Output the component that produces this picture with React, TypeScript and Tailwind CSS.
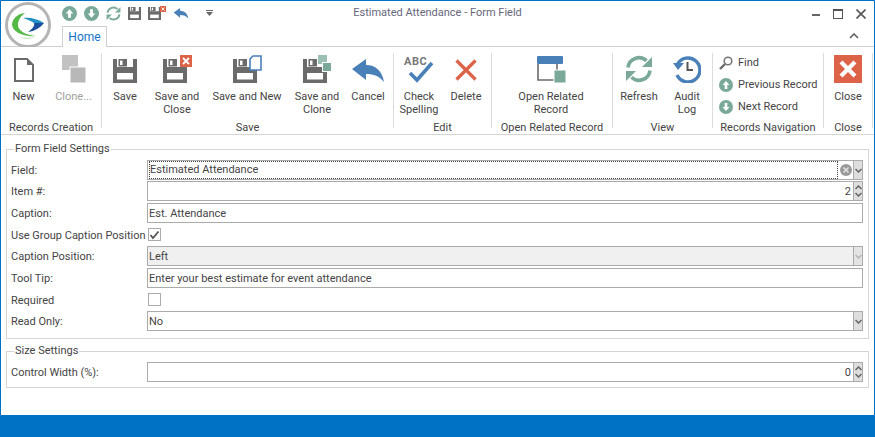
import React from 'react';

const TEAL = '#7aa999';
const GREY = '#6b6b6b';
const BLUE = '#4a80b8';
const RED = '#dc6347';

const Floppy = ({ size = 24 }: { size?: number }) => (
  <svg width={size} height={size} viewBox="0 0 24 24" className="block">
    <path fill={GREY} d="M0 0H4V8H20V0H24V24H0Z" />
    <rect x="4" y="14" width="16" height="6.5" fill="#fff" />
    <path fill={GREY} fillRule="evenodd" d="M5.5 0H14V7.5H5.5ZM7 1.5V6H9.5V1.5Z" />
  </svg>
);

const XBox = ({ size }: { size: number }) => (
  <svg width={size} height={size} viewBox="0 0 12 12" className="block">
    <rect width="12" height="12" fill={RED} />
    <path d="M3 3L9 9M9 3L3 9" stroke="#fff" strokeWidth="1.8" />
  </svg>
);

const ArrowCircle = ({ size = 15, down = false }: { size?: number; down?: boolean }) => (
  <svg width={size} height={size} viewBox="0 0 16 16" className="block">
    <circle cx="8" cy="8" r="8" fill={TEAL} />
    <path
      fill="#fff"
      d={down ? 'M6.5 3.5H9.5V8H12L8 12.5L4 8H6.5Z' : 'M6.5 12.5H9.5V8H12L8 3.5L4 8H6.5Z'}
    />
  </svg>
);

const Refresh = ({ size = 28 }: { size?: number }) => (
  <svg width={size} height={size} viewBox="0 0 28 28" className="block">
    <path d="M3 12.5A11 11 0 0 1 21.5 5.8" fill="none" stroke={TEAL} strokeWidth="3.6" />
    <path d="M25 15.5A11 11 0 0 1 6.5 22.2" fill="none" stroke={TEAL} strokeWidth="3.6" />
    <path d="M27 2V12H17Z" fill={TEAL} />
    <path d="M1 26V16H11Z" fill={TEAL} />
  </svg>
);

const Reply = ({ w = 32, h = 24 }: { w?: number; h?: number }) => (
  <svg width={w} height={h} viewBox="0 0 32 24" className="block">
    <path fill={BLUE} d="M0 10L14 0V6C24 6 30 12 32 23C27 17 22 15 14 15V21Z" />
  </svg>
);

const Logo = () => (
  <svg width="50" height="47" viewBox="0 0 50 47" className="block">
    <circle cx="27" cy="25" r="21.5" fill="#fff" stroke="#b4b4b4" strokeWidth="3" />
    <path fill="#55b947" d="M24 13C15 14 11 20 11 25C12 32 22 37 35 36C25 35 17 31 17 25C17 20 20 16 24 13Z" />
    <path fill="#c9e6c0" d="M18 37C24 40 30 39 35 37C29 38 23 38 18 37Z" />
    <path fill="#1f8fc4" d="M22 18C29 17 37 19 43 23L33 23C30 21 26 19 22 18Z" />
    <path fill="#1c4f9c" d="M33 23H43C39 28 34 31 27 32C31 29 34 26 33 23Z" />
  </svg>
);

const RibbonButton = ({
  w,
  icon,
  lines,
  disabled = false,
}: {
  w: string;
  icon: React.ReactNode;
  lines: string[];
  disabled?: boolean;
}) => (
  <div className={`flex flex-col items-center ${w}`}>
    <div className="flex h-[37px] w-full items-end justify-center pb-[7px]">{icon}</div>
    {lines.map((l) => (
      <div key={l} className={`whitespace-nowrap leading-[13px] ${disabled ? 'text-[#a0a0a0]' : ''}`}>
        {l}
      </div>
    ))}
  </div>
);

const Group = ({ w, label, children }: { w: string; label: string; children: React.ReactNode }) => (
  <div className={`flex h-full shrink-0 flex-col ${w}`}>
    <div className="flex h-[74px] shrink-0 pt-[6px]">{children}</div>
    <div className="h-[13px] whitespace-nowrap text-center leading-[14px]">{label}</div>
  </div>
);

const Sep = () => <div className="mt-[6px] h-[75px] w-px shrink-0 bg-[#dcdcdc]" />;

const Row = ({ h, label, children }: { h: string; label: string; children: React.ReactNode }) => (
  <div className={`flex ${h}`}>
    <div className="h-[20px] w-[136px] shrink-0 whitespace-nowrap leading-[22px]">{label}</div>
    <div className="min-w-0 flex-1">{children}</div>
  </div>
);

const Chevron = ({ up = false, color = '#666' }: { up?: boolean; color?: string }) => (
  <svg width="7" height="5" viewBox="0 0 7 5" className="block">
    <path d={up ? 'M0.5 4L3.5 1L6.5 4' : 'M0.5 1L3.5 4L6.5 1'} fill="none" stroke={color} strokeWidth="1.5" />
  </svg>
);

const DropBtn = ({ faded = false }: { faded?: boolean }) => (
  <div className={`flex w-[9px] shrink-0 items-center justify-center border-l border-[#ababab] ${faded ? 'bg-[#e4e4e4]' : 'bg-[#dedede]'}`}>
    <Chevron color={faded ? '#b5b5b5' : '#666'} />
  </div>
);

const SpinBtn = () => (
  <div className="flex w-[9px] shrink-0 flex-col items-center justify-center gap-[2px] border-l border-[#ababab] bg-[#dedede]">
    <Chevron up />
    <Chevron />
  </div>
);

const Input = ({
  children,
  right,
  alignRight = false,
  bg = 'bg-white',
}: {
  children?: React.ReactNode;
  right?: React.ReactNode;
  alignRight?: boolean;
  bg?: string;
}) => (
  <div className={`flex h-[20px] border border-[#ababab] ${bg}`}>
    <div className={`min-w-0 flex-1 px-px leading-[20px] ${alignRight ? 'pr-[2px] text-right' : ''}`}>{children}</div>
    {right}
  </div>
);

const Check = ({ checked = false }: { checked?: boolean }) => (
  <div className="mt-[3px] ml-px flex h-[13px] w-[13px] items-center justify-center border border-[#ababab] bg-white">
    {checked && (
      <svg width="11" height="10" viewBox="0 0 11 10" className="block">
        <path d="M1.5 5L4 8L9.5 1.5" fill="none" stroke="#555" strokeWidth="1.8" />
      </svg>
    )}
  </div>
);

const ListItem = ({ icon, label }: { icon: React.ReactNode; label: string }) => (
  <div className="flex h-[22px] items-center">
    <div className="flex w-[25px] justify-center pl-[1px]">{icon}</div>
    <span className="whitespace-nowrap">{label}</span>
  </div>
);

export default function App() {
  return (
    <div
      className="flex h-[437px] w-[875px] flex-col overflow-hidden border-x border-t border-[#0072c6] bg-white text-[11px] text-[#444]"
      style={{ fontFamily: 'Roboto, sans-serif' }}
    >
      {/* title bar */}
      <div className="flex h-[46px] shrink-0 border-b border-[#cfcfcf]">
        <div className="-mt-px h-[47px] w-[61px] shrink-0 overflow-hidden">
          <Logo />
        </div>
        <div className="flex min-w-0 flex-1 flex-col">
          <div className="grid h-[26px] grid-cols-[1fr_auto_1fr] items-center">
            <div className="flex items-center gap-[7px] pb-[1px]">
              <ArrowCircle />
              <ArrowCircle down />
              <Refresh size={15} />
              <Floppy size={13} />
              <div className="relative h-[14px] w-[18px]">
                <div className="mt-[1px]">
                  <Floppy size={13} />
                </div>
                <div className="absolute top-0 right-0">
                  <XBox size={6} />
                </div>
              </div>
              <Reply w={16} h={11} />
              <svg width="7" height="7" viewBox="0 0 7 7" className="ml-[10px] block">
                <path d="M0 0H7V1H0ZM0 2H7L3.5 6Z" fill="#666" />
              </svg>
            </div>
            <div className="-ml-[61px] whitespace-nowrap text-[#66667a]">Estimated Attendance - Form Field</div>
            <div className="flex items-center justify-end gap-[13px] pr-[8px]">
              <div className="mt-[3px] h-[2px] w-[8px] bg-[#666]" />
              <div className="h-[10px] w-[10px] border border-t-[2px] border-[#555]" />
              <svg width="10" height="10" viewBox="0 0 10 10" className="block">
                <path d="M0.5 0.5L9.5 9.5M9.5 0.5L0.5 9.5" stroke="#555" strokeWidth="1.6" />
              </svg>
            </div>
          </div>
          <div className="flex h-[20px] items-end justify-between">
            <div className="z-10 -mb-px h-[21px] w-[45px] border-x border-t border-[#cfcfcf] bg-white text-center text-[12px] leading-[21px] text-[#1273c9]">
              Home
            </div>
            <svg width="10" height="6" viewBox="0 0 10 6" className="mr-[15px] mb-[7px] block">
              <path d="M1 5L5 1L9 5" fill="none" stroke="#666" strokeWidth="1.7" />
            </svg>
          </div>
        </div>
      </div>

      {/* ribbon */}
      <div className="flex h-[88px] shrink-0 border-b border-[#d5d5d5]">
        <Group w="w-[100px]" label="Records Creation">
          <RibbonButton
            w="w-[45px]"
            lines={['New']}
            icon={
              <svg width="20" height="24" viewBox="0 0 20 24" className="mb-[1px] block">
                <path d="M1 1H13L19 7V23H1Z" fill="#fff" stroke={GREY} strokeWidth="2" />
                <path d="M13 1V7H19Z" fill={GREY} />
              </svg>
            }
          />
          <RibbonButton
            w="w-[55px]"
            lines={['Clone...']}
            disabled
            icon={
              <svg width="24" height="28" viewBox="0 0 24 28" className="block">
                <rect width="16" height="15" fill="#c2c2c2" />
                <rect x="8" y="12" width="16" height="16" fill="#b8b8b8" stroke="#fff" />
              </svg>
            }
          />
        </Group>
        <Sep />
        <Group w="w-[291px]" label="Save">
          <RibbonButton w="w-[46px]" lines={['Save']} icon={<Floppy />} />
          <RibbonButton
            w="w-[58px]"
            lines={['Save and', 'Close']}
            icon={
              <div className="relative h-[28px] w-[28px]">
                <div className="absolute bottom-0 left-0">
                  <Floppy />
                </div>
                <div className="absolute top-0 right-[-1px]">
                  <XBox size={12} />
                </div>
              </div>
            }
          />
          <RibbonButton
            w="w-[82px]"
            lines={['Save and New']}
            icon={
              <div className="relative h-[28px] w-[28px]">
                <div className="absolute bottom-0 left-0">
                  <Floppy />
                </div>
                <svg width="13" height="16" viewBox="0 0 13 16" className="absolute top-0 right-[-1px] block">
                  <path d="M1 4L4 1H12V15H1Z" fill="#fff" stroke={BLUE} strokeWidth="1.6" />
                </svg>
              </div>
            }
          />
          <RibbonButton
            w="w-[58px]"
            lines={['Save and', 'Clone']}
            icon={
              <div className="relative h-[28px] w-[29px]">
                <div className="absolute bottom-0 left-0">
                  <Floppy />
                </div>
                <div className="absolute top-0 right-[5px] h-[9px] w-[9px] bg-[#9cc0b2]" />
                <div className="absolute top-[7px] right-0 h-[10px] w-[10px] border border-white bg-[#7aa999]" />
              </div>
            }
          />
          <RibbonButton w="w-[44px]" lines={['Cancel']} icon={<Reply />} />
        </Group>
        <Sep />
        <Group w="w-[97px]" label="Edit">
          <RibbonButton
            w="w-[50px]"
            lines={['Check', 'Spelling']}
            icon={
              <svg width="30" height="28" viewBox="0 0 30 28" className="block">
                <text x="0" y="10" fontSize="11" fontWeight="700" letterSpacing="0.5" fill="#777" fontFamily="Roboto, sans-serif">
                  ABC
                </text>
                <path d="M6 18L13 25L28 8" fill="none" stroke={BLUE} strokeWidth="3.6" />
              </svg>
            }
          />
          <RibbonButton
            w="w-[44px]"
            lines={['Delete']}
            icon={
              <svg width="22" height="22" viewBox="0 0 22 22" className="mb-[2px] block">
                <path d="M1.5 1.5L20.5 20.5M20.5 1.5L1.5 20.5" stroke={RED} strokeWidth="3.2" />
              </svg>
            }
          />
        </Group>
        <Sep />
        <Group w="w-[120px]" label="Open Related Record">
          <RibbonButton
            w="w-[118px]"
            lines={['Open Related', 'Record']}
            icon={
              <svg width="29" height="27" viewBox="0 0 29 27" className="block">
                <path d="M1 8V24H20V8" fill="none" stroke={GREY} strokeWidth="1.6" />
                <rect width="26" height="8" rx="1" fill={BLUE} />
                <rect x="17" y="14" width="12" height="13" fill={TEAL} stroke="#fff" />
              </svg>
            }
          />
        </Group>
        <Sep />
        <Group w="w-[99px]" label="View">
          <RibbonButton w="w-[52px]" lines={['Refresh']} icon={<Refresh />} />
          <RibbonButton
            w="w-[44px]"
            lines={['Audit', 'Log']}
            icon={
              <svg width="28" height="28" viewBox="0 0 28 28" className="block">
                <path d="M4.5 9A12 12 0 1 1 4 20" fill="none" stroke={BLUE} strokeWidth="3.4" />
                <path d="M0 8H11L5 15Z" fill={BLUE} />
                <path d="M14.5 7V15H20" fill="none" stroke="#555" strokeWidth="2" />
              </svg>
            }
          />
        </Group>
        <Sep />
        <Group w="w-[110px]" label="Records Navigation">
          <div className="-mt-[1px] flex flex-col">
            <ListItem
              label="Find"
              icon={
                <svg width="14" height="14" viewBox="0 0 14 14" className="block">
                  <circle cx="9" cy="5" r="3.8" fill="none" stroke="#777" strokeWidth="1.6" />
                  <path d="M6 8L1 13" stroke={GREY} strokeWidth="2.4" />
                </svg>
              }
            />
            <ListItem label="Previous Record" icon={<ArrowCircle size={14} />} />
            <ListItem label="Next Record" icon={<ArrowCircle size={14} down />} />
          </div>
        </Group>
        <Sep />
        <Group w="w-[48px]" label="Close">
          <RibbonButton w="w-[48px]" lines={['Close']} icon={<XBox size={28} />} />
        </Group>
        <Sep />
      </div>

      {/* form */}
      <div className="flex min-h-0 flex-1 flex-col px-[5px]">
        <fieldset className="mt-[7px] border border-[#d5d5d5] pt-[4px] pr-[5px] pb-[7px] pl-[4px]">
          <legend className="ml-[3px] px-[1px] leading-[14px]">Form Field Settings</legend>
          <Row h="h-[21px]" label="Field:">
            <Input
              right={
                <>
                  <div className="flex w-[14px] shrink-0 items-center justify-center">
                    <div className="flex h-[12px] w-[12px] items-center justify-center rounded-full bg-[#9a9a9a]">
                      <svg width="6" height="6" viewBox="0 0 6 6" className="block">
                        <path d="M0.5 0.5L5.5 5.5M5.5 0.5L0.5 5.5" stroke="#e8e8e8" strokeWidth="1.3" />
                      </svg>
                    </div>
                  </div>
                  <DropBtn />
                </>
              }
            >
              <div className="h-full border border-dotted border-[#444] leading-[16px]">Estimated Attendance</div>
            </Input>
          </Row>
          <Row h="h-[22px]" label="Item #:">
            <Input alignRight right={<SpinBtn />}>
              2
            </Input>
          </Row>
          <Row h="h-[22px]" label="Caption:">
            <Input>Est. Attendance</Input>
          </Row>
          <Row h="h-[21px]" label="Use Group Caption Position">
            <Check checked />
          </Row>
          <Row h="h-[22px]" label="Caption Position:">
            <Input bg="bg-[#f0f0f0]" right={<DropBtn faded />}>
              Left
            </Input>
          </Row>
          <Row h="h-[22px]" label="Tool Tip:">
            <Input>Enter your best estimate for event attendance</Input>
          </Row>
          <Row h="h-[21px]" label="Required">
            <Check />
          </Row>
          <Row h="h-[20px]" label="Read Only:">
            <Input right={<DropBtn />}>No</Input>
          </Row>
        </fieldset>

        <fieldset className="mt-[5px] border border-[#d5d5d5] pt-[4px] pr-[5px] pb-[5px] pl-[4px]">
          <legend className="ml-[3px] px-[1px] leading-[14px]">Size Settings</legend>
          <Row h="h-[20px]" label="Control Width (%):">
            <Input alignRight right={<SpinBtn />}>
              0
            </Input>
          </Row>
        </fieldset>
      </div>

      <div className="h-[22px] shrink-0 bg-[#0072c6]" />
    </div>
  );
}
